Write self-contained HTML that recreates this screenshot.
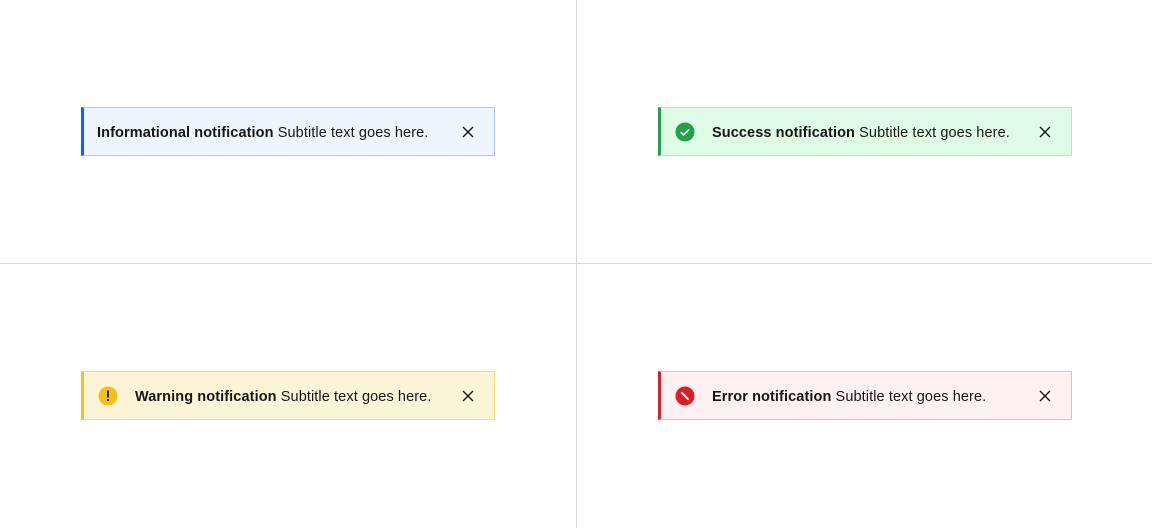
<!DOCTYPE html>
<html><head><style>
body{margin:0;width:1152px;height:528px;background:#fff;position:relative;overflow:hidden;font-family:"Liberation Sans",sans-serif;font-size:14.5px;color:#161616}
.vl{position:absolute;left:576px;top:0;width:1px;height:528px;background:#d8d8d8}
.hl{position:absolute;top:263px;left:0;width:1152px;height:1px;background:#d8d8d8}
.n{position:absolute;width:410px;height:47px;border:1px solid;border-left:3px solid;box-sizing:content-box}
.t{position:absolute;top:2px;line-height:47px;white-space:nowrap;letter-spacing:0.1px}
.t b{font-weight:bold}
.ic{position:absolute;left:14px;top:14px;width:20px;height:20px}
.x{position:absolute;right:19px;top:17px;width:14px;height:14px}
</style></head><body>
<div class="vl"></div><div class="hl"></div>

<div class="n" style="left:81px;top:107px;background:#edf5ff;border-color:#a6c8ff;border-left-color:#0f62fe">
<div class="t" style="left:13px"><b>Informational notification</b> Subtitle text goes here.</div>
<svg class="x" viewBox="0 0 14 14"><path d="M2 2L12 12M12 2L2 12" stroke="#161616" stroke-width="1.4"/></svg>
</div>

<div class="n" style="left:658px;top:107px;background:#defbe6;border-color:#a7f0ba;border-left-color:#24a148">
<svg class="ic" viewBox="0 0 20 20"><circle cx="10" cy="10" r="9.5" fill="#24a148"/><path d="M5.8 10.2L8.6 13L14.2 7.4" stroke="#fff" stroke-width="1.6" fill="none"/></svg>
<div class="t" style="left:51px"><b>Success notification</b> Subtitle text goes here.</div>
<svg class="x" viewBox="0 0 14 14"><path d="M2 2L12 12M12 2L2 12" stroke="#161616" stroke-width="1.4"/></svg>
</div>

<div class="n" style="left:81px;top:371px;background:#fcf4d6;border-color:#fddc69;border-left-color:#f1c21b">
<svg class="ic" viewBox="0 0 20 20"><circle cx="10" cy="10" r="9.5" fill="#f1c21b"/><rect x="9.1" y="4.5" width="1.8" height="7" fill="#161616"/><rect x="9.1" y="13" width="1.8" height="2" fill="#161616"/></svg>
<div class="t" style="left:51px"><b>Warning notification</b> Subtitle text goes here.</div>
<svg class="x" viewBox="0 0 14 14"><path d="M2 2L12 12M12 2L2 12" stroke="#161616" stroke-width="1.4"/></svg>
</div>

<div class="n" style="left:658px;top:371px;background:#fff1f1;border-color:#ffb3b8;border-left-color:#da1e28">
<svg class="ic" viewBox="0 0 20 20"><circle cx="10" cy="10" r="9.5" fill="#da1e28"/><path d="M6.3 6.3L13.7 13.7" stroke="#fff" stroke-width="1.8"/></svg>
<div class="t" style="left:51px"><b>Error notification</b> Subtitle text goes here.</div>
<svg class="x" viewBox="0 0 14 14"><path d="M2 2L12 12M12 2L2 12" stroke="#161616" stroke-width="1.4"/></svg>
</div>
</body></html>
